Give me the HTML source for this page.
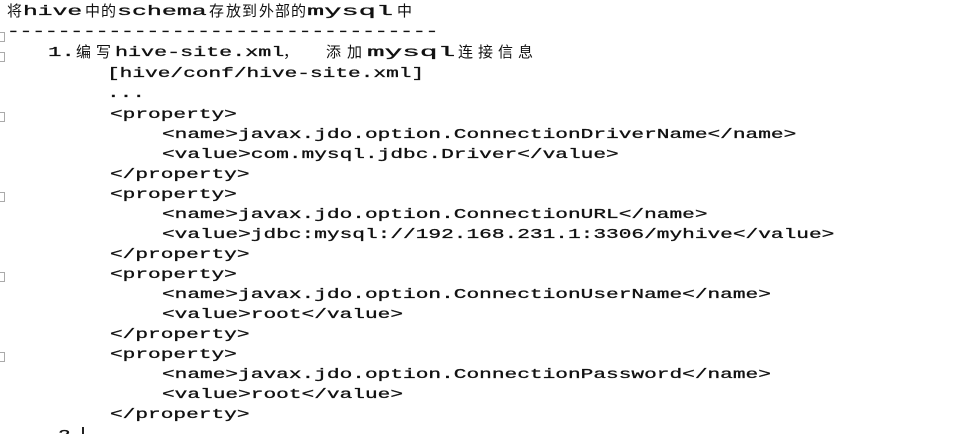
<!DOCTYPE html>
<html><head><meta charset="utf-8">
<style>
html,body{margin:0;padding:0;background:#fff;width:969px;height:434px;overflow:hidden;position:relative}
.l{position:absolute;left:0;height:20px;line-height:20px;white-space:pre;font-family:"Liberation Mono",monospace;font-size:14px;color:#111;transform:scaleX(1.51);transform-origin:0 0;-webkit-text-stroke:0.3px #111}
.s{position:absolute;height:20px;line-height:20px;white-space:pre;font-family:"Liberation Mono",monospace;font-size:14px;color:#111;transform-origin:0 0;-webkit-text-stroke:0.3px #111}
.k{position:absolute;height:20px;line-height:20px;white-space:pre;font-family:"Noto Sans CJK SC","WenQuanYi Zen Hei",sans-serif;font-size:15px;color:#111}
.m{position:absolute;left:0;width:4px;height:8px;border:1px solid #aaa;border-left:none}
</style></head><body>
<span class="k" style="top:1px;left:7px">将</span>
<span class="s" style="top:2px;left:23px;transform:scaleX(1.76)">hive</span>
<span class="k" style="top:1px;left:85px">中</span>
<span class="k" style="top:1px;left:101px">的</span>
<span class="s" style="top:2px;left:117px;transform:scaleX(1.78)">schema</span>
<span class="k" style="top:1px;left:209px">存</span>
<span class="k" style="top:1px;left:226px">放</span>
<span class="k" style="top:1px;left:242px">到</span>
<span class="k" style="top:1px;left:259px">外</span>
<span class="k" style="top:1px;left:275px">部</span>
<span class="k" style="top:1px;left:291px">的</span>
<span class="s" style="top:2px;left:307px;transform:scaleX(2.05)">mysql</span>
<span class="k" style="top:1px;left:397px">中</span>

<div class="l" style="top:22px;left:7px">----------------------------------</div>

<span class="s" style="top:43px;left:48px;transform:scaleX(1.6)">1.</span>
<span class="k" style="top:42px;left:76px">编</span>
<span class="k" style="top:42px;left:96px">写</span>
<span class="s" style="top:43px;left:115px;transform:scaleX(1.55)">hive-site.xml</span>
<span class="k" style="top:42px;left:283px">，</span>
<span class="k" style="top:42px;left:326px">添</span>
<span class="k" style="top:42px;left:347px">加</span>
<span class="s" style="top:43px;left:367px;transform:scaleX(2.1)">mysql</span>
<span class="k" style="top:42px;left:458px">连</span>
<span class="k" style="top:42px;left:478px">接</span>
<span class="k" style="top:42px;left:498px">信</span>
<span class="k" style="top:42px;left:518px">息</span>

<div class="l" style="top:64px;left:107px">[hive/conf/hive-site.xml]</div>
<div class="l" style="top:84px;left:107px">...</div>
<div class="l" style="top:105px;left:110px">&lt;property&gt;</div>
<div class="l" style="top:125px;left:162px">&lt;name&gt;javax.jdo.option.ConnectionDriverName&lt;/name&gt;</div>
<div class="l" style="top:145px;left:162px">&lt;value&gt;com.mysql.jdbc.Driver&lt;/value&gt;</div>
<div class="l" style="top:165px;left:110px">&lt;/property&gt;</div>
<div class="l" style="top:185px;left:110px">&lt;property&gt;</div>
<div class="l" style="top:205px;left:162px">&lt;name&gt;javax.jdo.option.ConnectionURL&lt;/name&gt;</div>
<div class="l" style="top:225px;left:162px">&lt;value&gt;jdbc:mysql://192.168.231.1:3306/myhive&lt;/value&gt;</div>
<div class="l" style="top:245px;left:110px">&lt;/property&gt;</div>
<div class="l" style="top:265px;left:110px">&lt;property&gt;</div>
<div class="l" style="top:285px;left:162px">&lt;name&gt;javax.jdo.option.ConnectionUserName&lt;/name&gt;</div>
<div class="l" style="top:305px;left:162px">&lt;value&gt;root&lt;/value&gt;</div>
<div class="l" style="top:325px;left:110px">&lt;/property&gt;</div>
<div class="l" style="top:345px;left:110px">&lt;property&gt;</div>
<div class="l" style="top:365px;left:162px">&lt;name&gt;javax.jdo.option.ConnectionPassword&lt;/name&gt;</div>
<div class="l" style="top:385px;left:162px">&lt;value&gt;root&lt;/value&gt;</div>
<div class="l" style="top:405px;left:110px">&lt;/property&gt;</div>
<div class="l" style="top:426px;left:58px">2.</div>
<div style="position:absolute;left:82px;top:427px;width:2px;height:10px;background:#222"></div>
<div class="m" style="top:32px"></div>
<div class="m" style="top:52px"></div>
<div class="m" style="top:112px"></div>
<div class="m" style="top:192px"></div>
<div class="m" style="top:272px"></div>
<div class="m" style="top:352px"></div>
</body></html>
